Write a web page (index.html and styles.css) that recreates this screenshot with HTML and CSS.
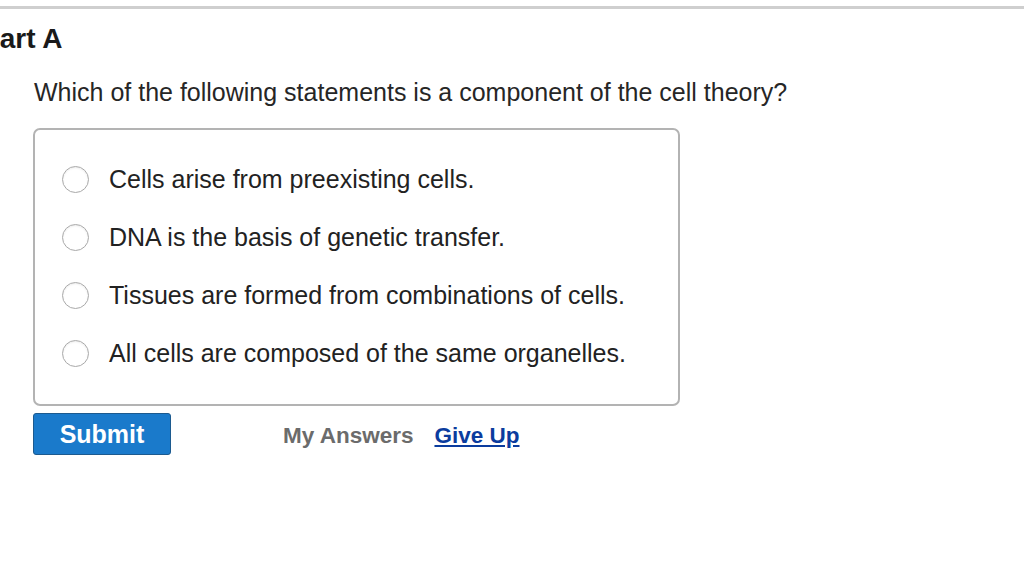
FILE: index.html
```html
<!DOCTYPE html>
<html>
<head>
<meta charset="utf-8">
<link rel="stylesheet" href="styles.css">
</head>
<body>
<div class="page">
  <div class="topline"></div>
  <h2 class="part-title">Part A</h2>
  <div class="content">
    <p class="question">Which of the following statements is a component of the cell theory?</p>
    <div class="choices">
      <label class="choice"><span class="radio"></span><span class="choice-text">Cells arise from preexisting cells.</span></label>
      <label class="choice"><span class="radio"></span><span class="choice-text">DNA is the basis of genetic transfer.</span></label>
      <label class="choice"><span class="radio"></span><span class="choice-text">Tissues are formed from combinations of cells.</span></label>
      <label class="choice"><span class="radio"></span><span class="choice-text">All cells are composed of the same organelles.</span></label>
    </div>
    <div class="actions">
      <button class="submit">Submit</button>
      <span class="my-answers">My Answers</span>
      <a class="give-up" href="#">Give Up</a>
    </div>
  </div>
</div>
</body>
</html>
```

FILE: styles.css
```css
html, body {
  margin: 0;
  padding: 0;
  background: #ffffff;
}
body {
  font-family: "Liberation Sans", Arial, sans-serif;
  color: #222;
  overflow: hidden;
}
.page {
  padding-top: 6px;
}
.topline {
  height: 3px;
  background: #cfcfcf;
}
.part-title {
  margin: 14px 0 0 -19px;
  font-size: 28px;
  line-height: 32px;
  font-weight: bold;
  color: #1a1a1a;
}
.content {
  padding-left: 33px;
}
.question {
  margin: 22px 0 0 1px;
  font-size: 25px;
  line-height: 30px;
  color: #262626;
}
.choices {
  margin-top: 21px;
  width: 647px;
  height: 278px;
  border: 2px solid #b3b3b3;
  border-radius: 7px;
  padding: 34px 0 0 27px;
  box-sizing: border-box;
  display: flex;
  flex-direction: column;
  gap: 28px;
}
.choice {
  display: flex;
  align-items: center;
  height: 30px;
}
.radio {
  width: 27px;
  height: 27px;
  border: 1px solid #a9a9a9;
  border-radius: 50%;
  box-sizing: border-box;
  background: #fff;
  box-shadow: inset 0 1px 2px rgba(0,0,0,0.08);
  flex: none;
}
.choice-text {
  margin-left: 20px;
  font-size: 25px;
  line-height: 30px;
  color: #222;
}
.actions {
  margin-top: 7px;
  display: flex;
  align-items: baseline;
}
.submit {
  width: 138px;
  height: 42px;
  background: #1a7acb;
  border: 1px solid #1c5a8f;
  border-radius: 3px;
  color: #fff;
  font-family: "Liberation Sans", Arial, sans-serif;
  font-weight: bold;
  font-size: 25px;
  padding: 0;
  margin: 0;
}
.my-answers {
  margin-left: 112px;
  font-size: 22.5px;
  font-weight: bold;
  color: #6b6b6b;
}
.give-up {
  margin-left: 21px;
  font-size: 22.5px;
  font-weight: bold;
  color: #0b3c9e;
  text-decoration: underline;
}
```
